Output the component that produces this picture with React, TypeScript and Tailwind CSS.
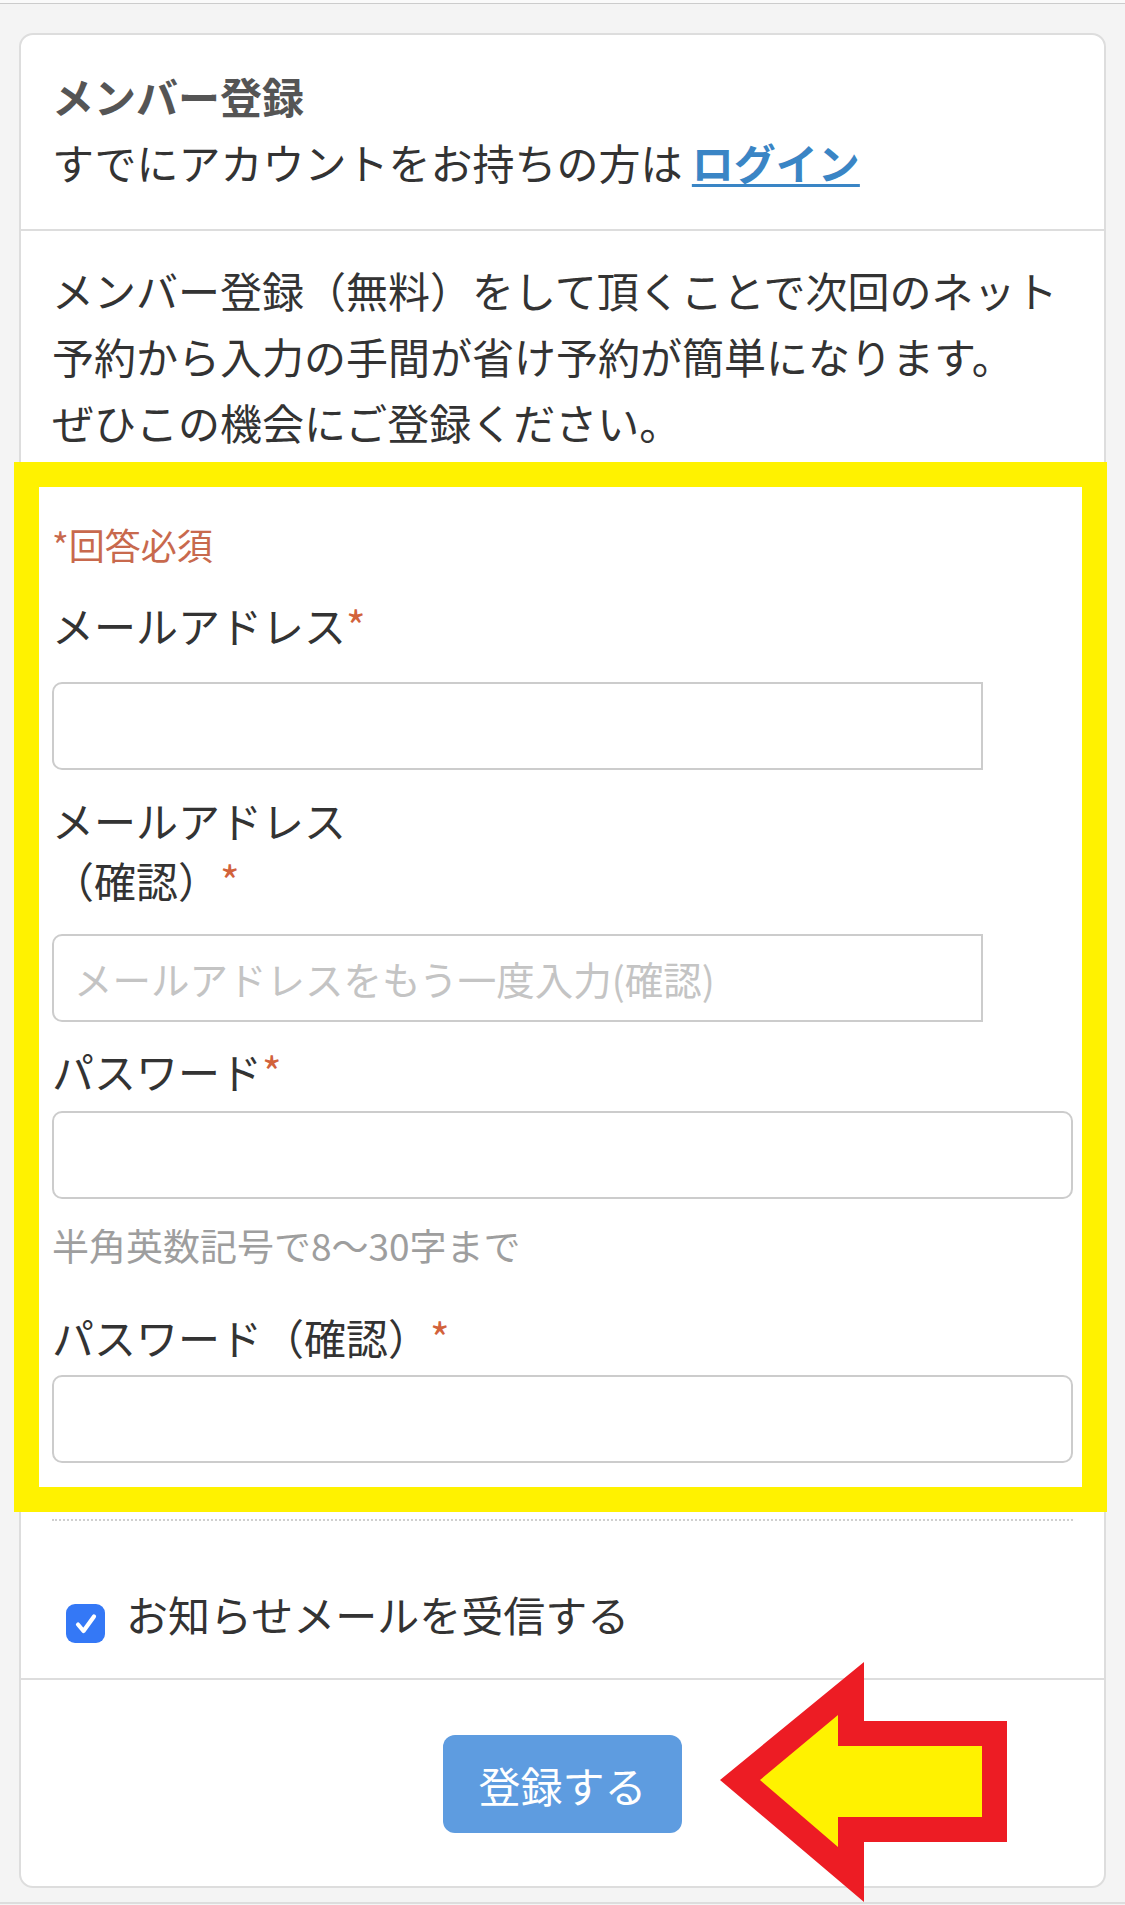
import React from "react";

function Req() {
  return <span className="text-[#d2623b]">*</span>;
}

function Label({ children, className = "" }: { children: React.ReactNode; className?: string }) {
  return <div className={"text-[42px] leading-[60px] text-[#333] " + className}>{children}</div>;
}

export default function App() {
  return (
    <div className="relative w-[1125px] min-h-[1905px] overflow-hidden bg-[#f4f4f4] font-['Noto_Sans_CJK_JP',sans-serif] text-[#333]">
      <div className="h-[3px] bg-[#fafafa]" />
      <div className="h-px bg-[#cccccc]" />

      <div className="ml-[19px] mt-[29px] w-[1087px] rounded-[14px] border-2 border-[#dddddd] bg-white">
        {/* header */}
        <div className="border-b-2 border-[#dddddd] px-[31px] pt-[28px] pb-[34px] text-[42px] leading-[66px]">
          <h1 className="font-bold text-[#555]">メンバー登録</h1>
          <p>
            すでにアカウントをお持ちの方は{" "}
            <a className="font-bold text-[#3a85c5] underline decoration-[3px] underline-offset-[4px]">ログイン</a>
          </p>
        </div>

        {/* intro */}
        <div className="px-[31px] pt-[26px] pb-[7px] text-[42px] leading-[66px]">
          <p>
            メンバー登録（無料）をして頂くことで次回のネット
            <br />
            予約から入力の手間が省け予約が簡単になります。
            <br />
            ぜひこの機会にご登録ください。
          </p>
        </div>

        {/* form */}
        <div className="relative px-[31px] pt-[55px] pb-[49px]">
          <div className="text-[36px] leading-[54px] text-[#c8694d]">*回答必須</div>

          <Label className="mt-[24px]">
            メールアドレス
            <Req />
          </Label>
          <input
            type="email"
            className="mt-[27px] block h-[88px] w-[931px] rounded-l-[10px] border-2 border-[#cccccc] bg-white px-[20px] text-[38px] outline-none"
          />

          <Label className="mt-[20px]">
            メールアドレス
            <br />
            （確認）
            <Req />
          </Label>
          <input
            type="email"
            placeholder="メールアドレスをもう一度入力(確認)"
            className="mt-[24px] block h-[88px] w-[931px] rounded-l-[10px] border-2 border-[#cccccc] bg-white px-[20px] text-[38.5px] outline-none placeholder:text-[#c4c4c4]"
          />

          <Label className="mt-[19px]">
            パスワード
            <Req />
          </Label>
          <input
            type="password"
            className="mt-[10px] block h-[88px] w-full rounded-[10px] border-2 border-[#cccccc] bg-white px-[20px] text-[38px] outline-none"
          />

          <div className="mt-[19px] text-[37px] leading-[54px] text-[#9e9e9e]">半角英数記号で8〜30字まで</div>

          <Label className="mt-[35px]">
            パスワード（確認）
            <Req />
          </Label>
          <input
            type="password"
            className="mt-[8px] block h-[88px] w-full rounded-[10px] border-2 border-[#cccccc] bg-white px-[20px] text-[38px] outline-none"
          />

          <div className="pointer-events-none absolute inset-y-0 left-[-7px] right-[-3px] border-[25px] border-[#fff200]" />
        </div>

        {/* dotted separator */}
        <div className="px-[31px] pt-[7px]">
          <div className="border-t-2 border-dotted border-[#cfcfcf]" />
        </div>

        {/* newsletter checkbox */}
        <div className="flex items-start border-b-2 border-[#dddddd] px-[31px] pt-[62px] pb-[29px]">
          <div className="ml-[14px] mt-[21px] flex h-[39px] w-[39px] shrink-0 items-center justify-center rounded-[9px] bg-[#3478f6]">
            <svg width="26" height="26" viewBox="0 0 26 26" fill="none">
              <path d="M5 13.5 L10.5 20 L21 5.5" stroke="white" strokeWidth="4.2" strokeLinecap="round" strokeLinejoin="round" />
            </svg>
          </div>
          <span className="ml-[21px] -translate-y-[2px] text-[42px] leading-[66px]">お知らせメールを受信する</span>
        </div>

        {/* submit */}
        <div className="flex justify-center pt-[55px] pb-[53px]">
          <button className="h-[98px] w-[239px] rounded-[12px] bg-[#5e9ce0] text-[42px] text-white">登録する</button>
        </div>
      </div>

      <div className="mt-[14px] h-[2px] bg-[#dddddd]" />

      {/* annotation arrow */}
      <svg className="absolute left-[700px] top-[1650px]" width="320" height="260" viewBox="0 0 320 260">
        <polygon points="20,130 164,12 164,71 307,71 307,192 164,192 164,252" fill="#ed1c24" />
        <polygon points="60,130 138,65 138,96 282,96 282,167 138,167 138,197" fill="#fff200" />
      </svg>
    </div>
  );
}
